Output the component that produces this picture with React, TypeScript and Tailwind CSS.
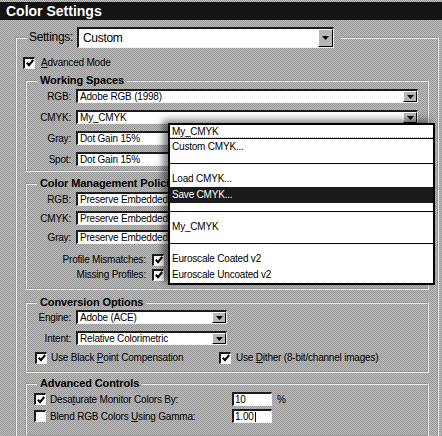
import React from "react";

const F = "font-['Liberation_Sans',Arial,sans-serif]";
const BG =
  "bg-[repeating-conic-gradient(#bdbdbd_0%_25%,#979797_0%_50%)] bg-[length:2px_2px]";
const GROOVE = "border-2 [border-style:groove] border-[#ececec]";
const SUNKEN =
  "bg-white border-t-2 border-l-2 border-b border-r border-t-[#1c1c1c] border-l-[#1c1c1c] border-b-[#f2f2f2] border-r-[#f2f2f2]";

function Arrow() {
  return (
    <svg width="7" height="4" viewBox="0 0 7 4" className="block">
      <path d="M0 0H7L3.5 4Z" fill="#000" />
    </svg>
  );
}

function DropBtn({ w = "w-[14px]" }: { w?: string }) {
  return (
    <div
      className={`${w} shrink-0 flex items-center justify-center bg-[#b6b6b6] border-t border-l border-b border-r border-t-white border-l-white border-b-black border-r-black`}
    >
      <Arrow />
    </div>
  );
}

function Select({
  value,
  className,
}: {
  value: string;
  className: string;
}) {
  return (
    <div className={`flex ${SUNKEN} ${className}`}>
      <div className="flex-1 min-w-0 overflow-hidden whitespace-nowrap pl-[2px] leading-[12px]">
        {value}
      </div>
      <DropBtn />
    </div>
  );
}

function Check({ checked, className = "" }: { checked?: boolean; className?: string }) {
  return (
    <div
      className={`w-[12px] h-[12px] shrink-0 flex items-center justify-center ${SUNKEN} ${className}`}
    >
      {checked && (
        <svg width="8" height="8" viewBox="0 0 8 8" className="block">
          <path d="M0.8 3.8 L3 6.2 L7.2 1" fill="none" stroke="#000" strokeWidth="2" />
        </svg>
      )}
    </div>
  );
}

function Field({ value, caret }: { value: string; caret?: boolean }) {
  return (
    <div className={`w-[40px] h-[14px] flex items-center ${SUNKEN}`}>
      <span className="pl-[1px] leading-[12px]">{value}</span>
      {caret && <span className="w-px h-[10px] bg-black ml-[1px]" />}
    </div>
  );
}

function Group({
  title,
  className = "",
  children,
}: {
  title: string;
  className?: string;
  children: React.ReactNode;
}) {
  return (
    <fieldset className={`mx-[8px] ${GROOVE} ${className}`}>
      <legend className="ml-[10px] px-[3px] font-bold text-[11px] leading-[13px] tracking-[-0.1px]">
        {title}
      </legend>
      {children}
    </fieldset>
  );
}

function Row({ label, value, w }: { label: string; value: string; w: string }) {
  return (
    <div className="flex items-center h-[14px]">
      <span className="w-[44px] text-right shrink-0">{label}</span>
      <Select value={value} className={`ml-[5px] h-[14px] ${w}`} />
    </div>
  );
}

function Item({ children, hi }: { children: React.ReactNode; hi?: boolean }) {
  return (
    <div
      className={`h-[16px] leading-[16px] px-[2px] whitespace-nowrap ${
        hi ? "bg-[#1b1b1b] text-white" : ""
      }`}
    >
      {children}
    </div>
  );
}

function Sep() {
  return (
    <div className="h-[16px] flex items-center">
      <div className="h-px w-full bg-black" />
    </div>
  );
}

export default function App() {
  return (
    <div
      className={`w-[442px] h-[436px] overflow-hidden relative ${BG} ${F} text-black text-[10px] tracking-[-0.2px] pt-[2px]`}
    >
      <div className="h-[18px] bg-[#141414] text-white font-bold text-[14px] leading-[18px] pl-[6px] tracking-normal">
        Color Settings
      </div>

      <fieldset className={`ml-[15px] mt-[7px] w-[424px] ${GROOVE} pb-[6px]`}>
        <legend className="ml-[10px] pl-[2px] pr-[7px]">
          <div className="flex items-center">
            <span className="text-[12px] tracking-[-0.3px] leading-[21px]">Settings:</span>
            <div className={`ml-[4px] w-[257px] h-[21px] flex ${SUNKEN}`}>
              <div className="flex-1 pl-[4px] text-[12px] tracking-[-0.3px] leading-[18px]">
                Custom
              </div>
              <DropBtn w="w-[15px]" />
            </div>
          </div>
        </legend>

        <div className="flex items-center h-[13px] mt-[8px] pl-[6px]">
          <Check checked />
          <span className="ml-[6px]">
            <u>A</u>dvanced Mode
          </span>
        </div>

        <Group title="Working Spaces" className="mt-[5px]">
          <div className="mt-[2px] flex flex-col gap-[7px] pb-[4px]">
            <Row label="RGB:" value="Adobe RGB (1998)" w="w-[342px]" />
            <Row label="CMYK:" value="My_CMYK" w="w-[342px]" />
            <Row label="Gray:" value="Dot Gain 15%" w="w-[342px]" />
            <Row label="Spot:" value="Dot Gain 15%" w="w-[342px]" />
          </div>
        </Group>

        <Group title="Color Management Policies" className="mt-[5px]">
          <div className="mt-[2px] flex flex-col gap-[5px] pb-[7px]">
            <Row label="RGB:" value="Preserve Embedded" w="w-[200px]" />
            <Row label="CMYK:" value="Preserve Embedded" w="w-[200px]" />
            <Row label="Gray:" value="Preserve Embedded" w="w-[200px]" />
            <div className="flex flex-col gap-[2px] mt-[4px]">
              <div className="flex items-center h-[13px]">
                <span className="w-[119px] text-right shrink-0">Profile Mismatches:</span>
                <Check checked className="ml-[6px]" />
              </div>
              <div className="flex items-center h-[13px]">
                <span className="w-[119px] text-right shrink-0">Missing Profiles:</span>
                <Check checked className="ml-[6px]" />
              </div>
            </div>
          </div>
        </Group>

        <Group title="Conversion Options" className="mt-[6px]">
          <div className="mt-[1px] flex flex-col gap-[7px]">
            <Row label="Engine:" value="Adobe (ACE)" w="w-[151px]" />
            <Row label="Intent:" value="Relative Colorimetric" w="w-[151px]" />
          </div>
          <div className="flex items-center h-[13px] mt-[6px] pl-[8px] mb-[7px]">
            <div className="w-[184px] flex items-center shrink-0">
              <Check checked />
              <span className="ml-[4px]">
                Use Black <u>P</u>oint Compensation
              </span>
            </div>
            <Check checked />
            <span className="ml-[5px]">
              Use <u>D</u>ither (8-bit/channel images)
            </span>
          </div>
        </Group>

        <Group title="Advanced Controls" className="mt-[4px]">
          <div className="mt-[2px] flex flex-col gap-[3px] pb-[12px] pl-[7px]">
            <div className="flex items-center h-[14px]">
              <Check checked />
              <span className="ml-[4px] w-[182px] shrink-0">
                Desa<u>t</u>urate Monitor Colors By:
              </span>
              <Field value="10" />
              <span className="ml-[5px]">%</span>
            </div>
            <div className="flex items-center h-[14px]">
              <Check />
              <span className="ml-[4px] w-[182px] shrink-0">
                Blend RGB Colors <u>U</u>sing Gamma:
              </span>
              <Field value="1.00" caret />
            </div>
          </div>
        </Group>
      </fieldset>

      <div className="absolute left-[168px] top-[123px] w-[267px] bg-white border-2 border-black shadow-[-5px_-3px_7px_rgba(0,0,0,0.5)]">
        <div className="h-[14px] border-b border-black">
          <div className="h-[13px] leading-[13px] px-[2px] border-b border-dotted border-[#aaaaaa]">
            My_CMYK
          </div>
        </div>
        <Item>Custom CMYK...</Item>
        <Sep />
        <Item>Load CMYK...</Item>
        <Item hi>Save CMYK...</Item>
        <Sep />
        <Item>My_CMYK</Item>
        <Sep />
        <Item>Euroscale Coated v2</Item>
        <Item>Euroscale Uncoated v2</Item>
      </div>
    </div>
  );
}
